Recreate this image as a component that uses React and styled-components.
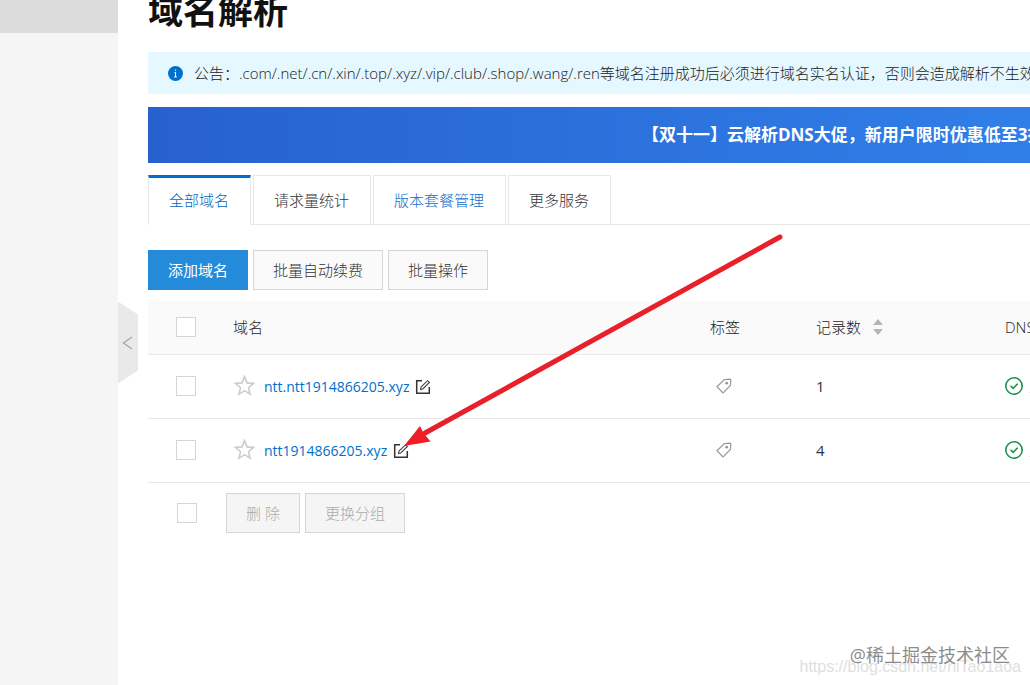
import styled, { createGlobalStyle } from "styled-components";

const DOMAINS = [
  { name: "ntt.ntt1914866205.xyz", records: 1 },
  { name: "ntt1914866205.xyz", records: 4 },
];

const TABS = [
  { label: "全部域名", active: true },
  { label: "请求量统计" },
  { label: "版本套餐管理", link: true },
  { label: "更多服务" },
];

function StarIcon() {
  return (
    <svg width="22" height="22" viewBox="0 0 22 22" fill="none">
      <path
        d="M11.500 1.600l2.500 6.300 6.600.5-5.100 4.300 1.600 6.600-5.600-3.600-5.600 3.600 1.600-6.600-5.100-4.300 6.600-.5z"
        stroke="#cccccc"
        strokeWidth="1.6"
      />
    </svg>
  );
}

function EditIcon() {
  return (
    <svg width="16" height="16" viewBox="0 0 16 16" fill="none">
      <path d="M7 1.700H1.700v12.600h12.600V8" stroke="#333" strokeWidth="1.5" />
      <path
        d="M5.500 10.600l.5-2.500 6.600-6.400 1.800 1.800-6.600 6.500z"
        stroke="#444"
        strokeWidth="1.1"
      />
    </svg>
  );
}

function TagIcon() {
  return (
    <svg width="16" height="16" viewBox="0 0 16 16" fill="none">
      <path
        d="M1 8.700L8.300 1.600l5.800-.5.7.8-.4 5.500L7 14.800z"
        stroke="#999"
        strokeWidth="1.2"
      />
      <circle cx="10.7" cy="5.2" r="1.4" fill="#999" />
    </svg>
  );
}

function CheckIcon() {
  return (
    <svg width="18" height="18" viewBox="0 0 18 18" fill="none">
      <circle cx="9" cy="9" r="8.2" stroke="#1e8e4e" strokeWidth="1.6" />
      <path d="M5.600 8.800l2.500 2.500 4.600-4.600" stroke="#1e8e4e" strokeWidth="1.6" />
    </svg>
  );
}

function App() {
  return (
    <>
      <GlobalStyle />
      <Page>
        <Sidebar>
          <SidebarItem />
          <Collapse aria-label="collapse">
            <svg width="12" height="16" viewBox="0 0 12 16" fill="none">
              <path d="M10 2L1.500 8l8.500 6" stroke="#a8a8a8" strokeWidth="1.4" />
            </svg>
          </Collapse>
        </Sidebar>
        <Main>
          <Title>域名解析</Title>
          <Notice>
            <svg width="15" height="15" viewBox="0 0 15 15">
              <circle cx="7.5" cy="7.5" r="7.5" fill="#0070cc" />
              <path
                d="M7.500 3.400v1.400M6.500 6.500h1v4.200M6.200 10.900h2.600"
                stroke="#e5f7ff"
                strokeWidth="1.1"
                fill="none"
              />
            </svg>
            <p>
              公告：.com/.net/.cn/.xin/.top/.xyz/.vip/.club/.shop/.wang/.ren等域名注册成功后必须进行域名实名认证，否则会造成解析不生效
            </p>
          </Notice>
          <Banner>【双十一】云解析DNS大促，新用户限时优惠低至3折</Banner>
          <Tabs>
            {TABS.map((tab) => (
              <Tab key={tab.label} $active={tab.active} $link={tab.link}>
                {tab.label}
              </Tab>
            ))}
          </Tabs>
          <Toolbar>
            <Button $primary>添加域名</Button>
            <Button>批量自动续费</Button>
            <Button>批量操作</Button>
          </Toolbar>
          <Table>
            <colgroup>
              <col width="69" />
              <col />
              <col width="106" />
              <col width="189" />
              <col width="41" />
            </colgroup>
            <thead>
              <tr>
                <Th>
                  <Checkbox aria-label="select all" />
                </Th>
                <Th>域名</Th>
                <Th>标签</Th>
                <Th>
                  <Sortable>
                    记录数
                    <svg width="10" height="16" viewBox="0 0 10 16">
                      <path d="M5 0l5 6H0zM5 16l5-6H0z" fill="#b5b5b5" />
                    </svg>
                  </Sortable>
                </Th>
                <Th>DNS服务器状态</Th>
              </tr>
            </thead>
            <tbody>
              {DOMAINS.map((domain) => (
                <tr key={domain.name}>
                  <Td>
                    <Checkbox aria-label={domain.name} />
                  </Td>
                  <Td>
                    <DomainCell>
                      <StarIcon />
                      <DomainName>
                        <a href="#domain">{domain.name}</a>
                        <EditIcon />
                      </DomainName>
                    </DomainCell>
                  </Td>
                  <Td>
                    <TagCell>
                      <TagIcon />
                    </TagCell>
                  </Td>
                  <Td>{domain.records}</Td>
                  <Td>
                    <Status>
                      <CheckIcon />
                      正常
                    </Status>
                  </Td>
                </tr>
              ))}
            </tbody>
          </Table>
          <Footer>
            <Checkbox aria-label="select page" />
            <FooterButtons>
              <Button disabled>删 除</Button>
              <Button disabled>更换分组</Button>
            </FooterButtons>
          </Footer>
        </Main>
        <Arrow width="380" height="216" viewBox="0 0 380 216">
          <path
            d="M377 3L22 199"
            stroke="#e8202a"
            strokeWidth="5"
            strokeLinecap="round"
          />
          <path d="M1 212L17 192l3.500 7 7 8.500z" fill="#f01c28" />
        </Arrow>
        <BlogMark>https://blog.csdn.net/niTao1aoa</BlogMark>
        <SiteMark>@稀土掘金技术社区</SiteMark>
      </Page>
    </>
  );
}

const GlobalStyle = createGlobalStyle`
  * {
    box-sizing: border-box;
  }
  body {
    margin: 0;
    background: #fff;
    color: #333;
    font-family: "Open Sans", "Noto Sans CJK SC", sans-serif;
    font-size: 15px;
    font-weight: 300;
    line-height: 20px;
  }
  svg {
    display: block;
    flex-shrink: 0;
  }
`;

const Page = styled.div`
  display: flex;
  min-height: 100vh;
  position: relative;
  overflow: hidden;
`;

const Sidebar = styled.aside`
  position: relative;
  flex: 0 0 118px;
  background: #f5f5f5;
`;

const SidebarItem = styled.div`
  height: 33px;
  background: #dcdcdc;
`;

const Collapse = styled.button`
  position: absolute;
  left: 100%;
  top: 50%;
  transform: translateY(-50%);
  width: 20px;
  height: 82px;
  padding: 0 4px;
  border: 0;
  background: #e9e9e9;
  clip-path: polygon(0 0, 100% 16%, 100% 84%, 0 100%);
`;

const Main = styled.main`
  flex: 1;
  min-width: 0;
  padding-left: 30px;
`;

const Title = styled.h1`
  margin: 0 0 30px;
  color: #111;
  font-size: 35px;
  line-height: 22px;
`;

const Notice = styled.div`
  display: flex;
  align-items: center;
  gap: 11px;
  height: 42px;
  padding-left: 20px;
  background: #e5f7ff;
  color: #222;
  white-space: nowrap;
  overflow: hidden;
  p {
    margin: 0;
  }
`;

const Banner = styled.div`
  margin-top: 13px;
  padding-left: 56%;
  background: linear-gradient(90deg, #2761cf, #307fe8);
  color: #fff;
  font-size: 17px;
  font-weight: bold;
  line-height: 56px;
  white-space: nowrap;
  overflow: hidden;
`;

const Tabs = styled.nav`
  display: flex;
  gap: 2px;
  height: 50px;
  margin-top: 12px;
  box-shadow: inset 0 -1px #e8e8e8;
`;

const Tab = styled.button`
  padding: 0 21px 0 20px;
  border: 1px solid #e8e8e8;
  border-top: ${({ $active }) =>
    $active ? "3px solid #0070cc" : "1px solid #e8e8e8"};
  border-bottom-color: ${({ $active }) => ($active ? "#fff" : "#e8e8e8")};
  padding-bottom: ${({ $active }) => ($active ? "2px" : "0")};
  background: #fff;
  color: ${({ $active, $link }) =>
    $active ? "#0065bd" : $link ? "#1070cc" : "#333"};
  font: inherit;
`;

const Toolbar = styled.div`
  display: flex;
  gap: 5px;
  margin: 25px 0 11px;
`;

const Button = styled.button`
  height: 40px;
  padding: 0 19px;
  border: 1px solid ${({ $primary }) => ($primary ? "#238bd9" : "#d5d5d5")};
  background: ${({ $primary }) => ($primary ? "#238bd9" : "#fafafa")};
  color: ${({ $primary }) => ($primary ? "#fff" : "#333")};
  font: inherit;
  font-weight: ${({ $primary }) => ($primary ? 400 : 300)};
  &:disabled {
    background: #f5f5f5;
    color: #aaa;
  }
`;

const Table = styled.table`
  width: 100%;
  table-layout: fixed;
  border-collapse: collapse;
`;

const Th = styled.th`
  height: 53px;
  padding: 0 0 0 16px;
  border-bottom: 1px solid #e8e8e8;
  background: #fafafa;
  color: #222;
  font-weight: 300;
  text-align: left;
  white-space: nowrap;
  overflow: hidden;
  &:first-child {
    padding-left: 28px;
  }
`;

const Td = styled.td`
  height: 64px;
  padding: 0 0 0 16px;
  border-bottom: 1px solid #e8e8e8;
  font-weight: 400;
  white-space: nowrap;
  overflow: hidden;
  &:first-child {
    padding-left: 28px;
  }
`;

const Checkbox = styled.input.attrs({ type: "checkbox" })`
  appearance: none;
  display: block;
  width: 20px;
  height: 20px;
  margin: 0;
  border: 1px solid #d5d5d5;
  background: #fff;
`;

const Sortable = styled.div`
  display: flex;
  align-items: center;
  gap: 12px;
`;

const DomainCell = styled.div`
  display: flex;
  align-items: center;
  gap: 9px;
`;

const DomainName = styled.div`
  display: flex;
  align-items: center;
  gap: 6px;
  padding-top: 2px;
  a {
    color: #0070cc;
    font-size: 14px;
    text-decoration: none;
  }
`;

const TagCell = styled.div`
  padding-left: 6px;
`;

const Status = styled.div`
  display: flex;
  align-items: center;
  gap: 6px;
  font-weight: 300;
`;

const Footer = styled.div`
  display: flex;
  align-items: center;
  padding: 10px 0 0 29px;
`;

const FooterButtons = styled.div`
  display: flex;
  gap: 5px;
  margin-left: 29px;
`;

const Arrow = styled.svg`
  position: absolute;
  left: 403px;
  top: 234px;
  pointer-events: none;
`;

const BlogMark = styled.span`
  position: absolute;
  right: 9px;
  bottom: 8px;
  color: #e0e0e0;
  font-family: "Liberation Sans", sans-serif;
  font-size: 16px;
  font-weight: 400;
`;

const SiteMark = styled.span`
  position: absolute;
  right: 20px;
  bottom: 20px;
  color: #8c8c8c;
  font-size: 18px;
  font-weight: 400;
  text-shadow: 0 0 2px #fff;
`;

export default App;
